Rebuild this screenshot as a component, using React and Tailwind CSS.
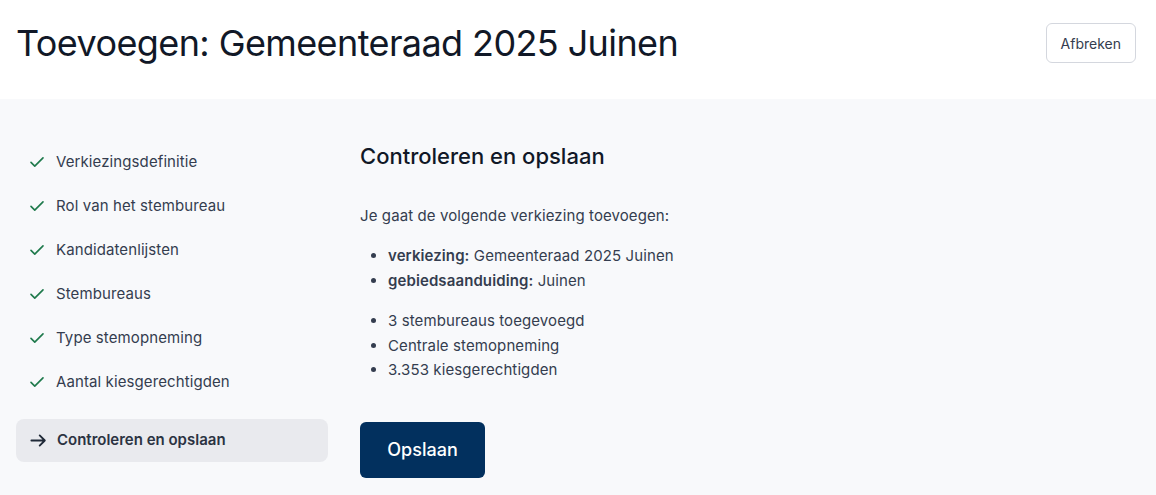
import React from 'react';

const steps = [
    'Verkiezingsdefinitie',
    'Rol van het stembureau',
    'Kandidatenlijsten',
    'Stembureaus',
    'Type stemopneming',
    'Aantal kiesgerechtigden',
];

const Check = () => (
    <svg width="18" height="18" viewBox="0 0 24 24" fill="none" stroke="#1f7a4c" strokeWidth="2.2" strokeLinecap="round" strokeLinejoin="round">
        <path d="M4 12.5l5 5L20 6.5" />
    </svg>
);

const Arrow = () => (
    <svg width="19" height="19" viewBox="0 0 24 24" fill="none" stroke="#1f2937" strokeWidth="2.3" strokeLinecap="round" strokeLinejoin="round">
        <path d="M3 12h17M13.5 5.5L20 12l-6.5 6.5" />
    </svg>
);

export default function App() {
    return (
        <div className="min-h-[495px] bg-[#f8f9fb] font-['Inter',sans-serif] text-[#343d4f]">
            {/* Header */}
            <header className="flex items-start justify-between bg-white pl-4 pr-5 h-[99px]">
                <h1 className="mt-[21px] text-[36px] leading-[44px] font-normal tracking-[-0.6px] text-[#111827]">
                    Toevoegen: Gemeenteraad 2025 Juinen
                </h1>
                <button className="mt-[23px] h-[40px] px-[14px] rounded-md border border-[#d4d7de] bg-white text-[14px] text-[#343d4f]">
                    Afbreken
                </button>
            </header>

            <div className="flex pl-4 pt-[39px]">
                {/* Sidebar */}
                <nav className="w-[312px] mt-[2px] flex flex-col">
                    {steps.map((s) => (
                        <div key={s} className="flex items-center gap-[10px] h-[44px] pl-[12px] text-[15px] tracking-[0.1px]">
                            <Check />
                            <span>{s}</span>
                        </div>
                    ))}
                    <div className="mt-[15px] flex items-center gap-[9px] h-[43px] pl-[13px] rounded-lg bg-[#e9eaee] text-[15px] font-semibold text-[#2b3342]">
                        <Arrow />
                        <span>Controleren en opslaan</span>
                    </div>
                </nav>

                {/* Main */}
                <main className="ml-[32px] pt-[4px]">
                    <h2 className="text-[22px] leading-[28px] font-medium text-[#111827]">Controleren en opslaan</h2>
                    <p className="mt-[34px] text-[15px] leading-[24px] tracking-[0.1px]">Je gaat de volgende verkiezing toevoegen:</p>
                    <ul className="mt-[15px] list-disc pl-[28px] text-[15px] leading-[25px] tracking-[0.1px]">
                        <li><strong className="font-semibold">verkiezing:</strong> Gemeenteraad 2025 Juinen</li>
                        <li><strong className="font-semibold">gebiedsaanduiding:</strong> Juinen</li>
                    </ul>
                    <ul className="mt-[16px] list-disc pl-[28px] text-[15px] leading-[24.5px] tracking-[0.1px]">
                        <li>3 stembureaus toegevoegd</li>
                        <li>Centrale stemopneming</li>
                        <li>3.353 kiesgerechtigden</li>
                    </ul>
                    <button className="mt-[39px] h-[56px] w-[125px] rounded-md bg-[#02305e] text-white text-[18px] font-medium">
                        Opslaan
                    </button>
                </main>
            </div>
        </div>
    );
}
